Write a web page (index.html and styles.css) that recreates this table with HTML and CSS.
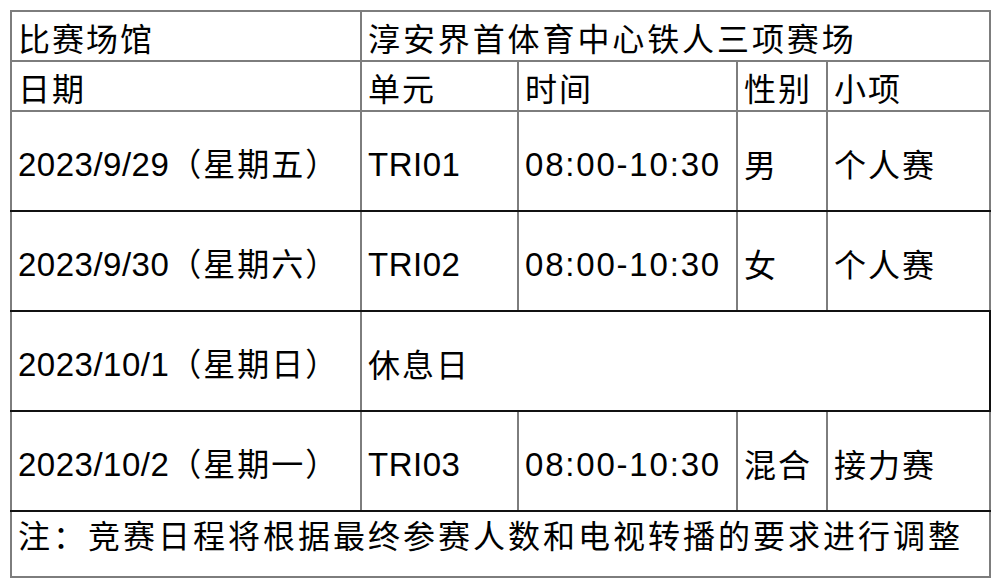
FILE: index.html
```html
<!DOCTYPE html>
<html lang="zh-CN">
<head>
<meta charset="utf-8">
<title>比赛日程</title>
<link rel="stylesheet" href="styles.css">
</head>
<body>
<table class="sched">
  <colgroup>
    <col class="c-date">
    <col class="c-unit">
    <col class="c-time">
    <col class="c-sex">
    <col class="c-item">
  </colgroup>
  <tr class="hdr">
    <td>比赛场馆</td>
    <td colspan="4" class="venue">淳安界首体育中心铁人三项赛场</td>
  </tr>
  <tr class="hdr">
    <td>日期</td>
    <td>单元</td>
    <td>时间</td>
    <td>性别</td>
    <td>小项</td>
  </tr>
  <tr class="day dark-bottom">
    <td><span class="lat">2023/9/29</span>（星期五）</td>
    <td><span class="lat">TRI01</span></td>
    <td><span class="lat time">08:00-10:30</span></td>
    <td>男</td>
    <td>个人赛</td>
  </tr>
  <tr class="day dark-bottom">
    <td><span class="lat">2023/9/30</span>（星期六）</td>
    <td><span class="lat">TRI02</span></td>
    <td><span class="lat time">08:00-10:30</span></td>
    <td>女</td>
    <td>个人赛</td>
  </tr>
  <tr class="day dark-bottom rest">
    <td><span class="lat">2023/10/1</span>（星期日）</td>
    <td colspan="4" class="dark-right">休息日</td>
  </tr>
  <tr class="day dark-bottom">
    <td><span class="lat">2023/10/2</span>（星期一）</td>
    <td><span class="lat">TRI03</span></td>
    <td><span class="lat time">08:00-10:30</span></td>
    <td>混合</td>
    <td>接力赛</td>
  </tr>
  <tr class="note">
    <td colspan="5">注：竞赛日程将根据最终参赛人数和电视转播的要求进行调整</td>
  </tr>
</table>
</body>
</html>
```

FILE: styles.css
```css
html, body {
  margin: 0;
  padding: 0;
  background: #ffffff;
}

body {
  padding: 10px 0 0 10px;
  font-family: "Noto Sans CJK SC", "Noto Sans", sans-serif;
  color: #000000;
}

.sched {
  border-collapse: collapse;
  table-layout: fixed;
  width: 979px;
  font-size: 32px;
  line-height: 40px;
}

.c-date { width: 350px; }
.c-unit { width: 157px; }
.c-time { width: 219px; }
.c-sex { width: 90px; }
.c-item { width: 163px; }

.sched td {
  border: 2px solid #7d7d7d;
  padding: 0 0 0 6px;
  vertical-align: middle;
  white-space: nowrap;
  overflow: hidden;
  letter-spacing: 2px;
}

.hdr td {
  height: 46px;
  padding-top: 2px;
}

.sched td.venue {
  letter-spacing: 2.9px;
}

.day td {
  height: 94px;
  padding-top: 4px;
}

.dark-bottom td {
  border-bottom-color: #111111;
}

.rest td {
  border-top-color: #111111;
}

.sched td.dark-right {
  border-right-color: #111111;
}

.note td {
  height: 62px;
  vertical-align: top;
  padding-top: 2px;
  letter-spacing: 3px;
}

.lat {
  font-family: "Liberation Sans", "Noto Sans", sans-serif;
  font-size: 33px;
  letter-spacing: 0.5px;
}

.time {
  letter-spacing: 1.8px;
}
```
